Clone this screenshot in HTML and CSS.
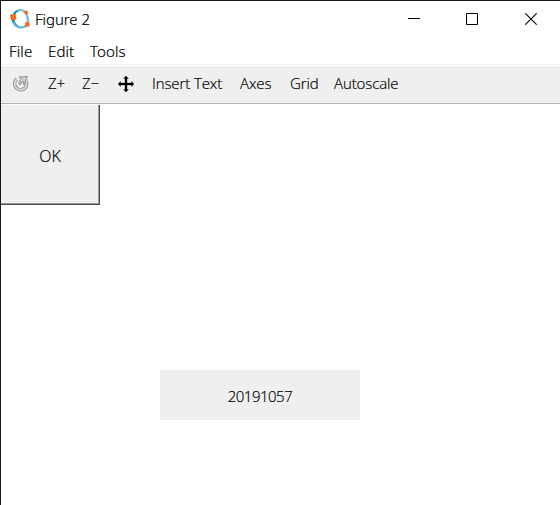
FILE: index.html
```html
<!DOCTYPE html>
<html lang="en">
<head>
<meta charset="utf-8">
<title>Figure 2</title>
<link rel="stylesheet" href="styles.css">
</head>
<body>
<div class="window">
  <header class="titlebar">
    <svg class="logo" width="22" height="22" viewBox="0 0 22 22">
      <path d="M17 4C13-1 5 1 3 8C1 16 8 22 17 19C10 20 5 16 5.500 10C6 3 12 1 17 4Z" fill="#168caf"/>
      <path d="M7 3C12-1 19 3 20 10C21 15 18 19 14 20C18 16 19 11 16 6C14 3 11 2 7 3Z" fill="#76bfdd"/>
      <path d="M4 14C6 19 11 21 17 18" fill="none" stroke="#66b7d9" stroke-width="2"/>
      <path d="M1 6.500L6.500 6L7.500 11.500L2 12.500ZM15 3L18.500 2.500L19 6L16 6.500ZM16 14.500L20.500 14V18.500L16.500 19Z" fill="#f16b22"/>
    </svg>
    <h1 class="title">Figure 2</h1>
    <div class="controls">
      <svg width="12" height="12" viewBox="0 0 12 12"><path d="M0 5.500H12" stroke="#000"/></svg>
      <svg width="12" height="12" viewBox="0 0 12 12"><path d="M.5.5H11.500V11.500H.5Z" fill="none" stroke="#000"/></svg>
      <svg width="12" height="12" viewBox="0 0 12 12"><path d="M.3.300L11.700 11.700M11.700.300L.3 11.700" stroke="#000" stroke-width="1.100"/></svg>
    </div>
  </header>
  <nav class="menubar"><span class="file">File</span><span class="edit">Edit</span><span class="tools">Tools</span></nav>
  <div class="toolbar">
    <svg class="rotate" width="18" height="18" viewBox="0 0 18 18">
      <path d="M5 4A6 6 0 1 0 14 6" fill="none" stroke="#999" stroke-width="3.600"/>
      <path d="M5 4A6 6 0 1 0 14 6" fill="none" stroke="#ddd" stroke-width="1.600"/>
      <path d="M7 2L15.500 1.500L12 10L10.500 6L8 10L6.500 8L9 4Z" fill="#ccc" stroke="#888" stroke-width=".9"/>
    </svg>
    <span class="zin">Z+</span><span class="zout">Z−</span>
    <svg class="pan" width="16" height="16" viewBox="0 0 16 16"><path d="M7 2.500H5.500L8 0L10.500 2.500H9V7H13.500V5.500L16 8L13.500 10.500V9H9V13.500H10.500L8 16L5.500 13.500H7V9H2.500V10.500L0 8L2.500 5.500V7H7Z" fill="#000" stroke="#000" stroke-width=".3"/></svg>
    <span class="insert">Insert Text</span><span class="axes">Axes</span><span class="grid">Grid</span><span class="auto">Autoscale</span>
  </div>
  <main class="canvas">
    <button class="ok"><span>OK</span></button>
    <div class="number"><span>20191057</span></div>
  </main>
</div>
</body>
</html>
```
FILE: styles.css
```css
* { box-sizing: border-box; }
body { margin: 0; background: #fff; color: #000; font: 350 15px/20px "Open Sans", sans-serif; -webkit-text-stroke: .2px #000; }
.window { width: 560px; height: 505px; border: solid #17131a; border-width: 1px 0 0 1px; overflow: hidden; display: flex; flex-direction: column; }
svg { display: block; flex: none; }
.titlebar { height: 38px; display: flex; align-items: flex-start; padding: 7px 23px 0 8px; }
.title { margin: 1px 0 0 4px; font: 350 15px/20px "Noto Sans", sans-serif; letter-spacing: -.05px; }
.controls { margin: 5px 0 0 auto; display: flex; gap: 46px; }
.controls svg:last-child { margin-left: 1px; }
.menubar { height: 25px; display: flex; padding: 2px 0 0 8px; font: 350 15px/20px "Noto Sans", sans-serif; letter-spacing: .1px; }
.menubar span, .toolbar span { flex: none; white-space: nowrap; }
.file { width: 39px; }
.edit { width: 42px; }
.toolbar { height: 40px; display: flex; align-items: center; padding-left: 11px; background: #efefef; border-top: 1px solid #f2f2f2; border-bottom: 1px solid #b3b3b3; box-shadow: inset 0 1px #fff; letter-spacing: -.1px; }
.toolbar span { margin-top: -2px; }
.rotate { margin-right: 18px; }
.zin { width: 34px; }
.zout { width: 36px; }
.pan { margin-right: 18px; }
.insert { width: 88px; }
.axes { width: 50px; }
.grid { width: 44px; }
.canvas { flex: 1; padding-top: 1px; }
.ok { display: flex; align-items: center; justify-content: center; width: 99px; height: 100px; padding: 3px 0 0; border: solid #4c4c4c; border-width: 0 1px 1px 0; border-radius: 0; background: #efefef; color: #000; font: inherit; font-size: 16px; box-shadow: inset -1px -1px #999; }
.number { display: flex; align-items: center; justify-content: center; width: 200px; height: 50px; margin: 165px 0 0 159px; padding-top: 2px; background: #efefef; letter-spacing: -.5px; }
```
